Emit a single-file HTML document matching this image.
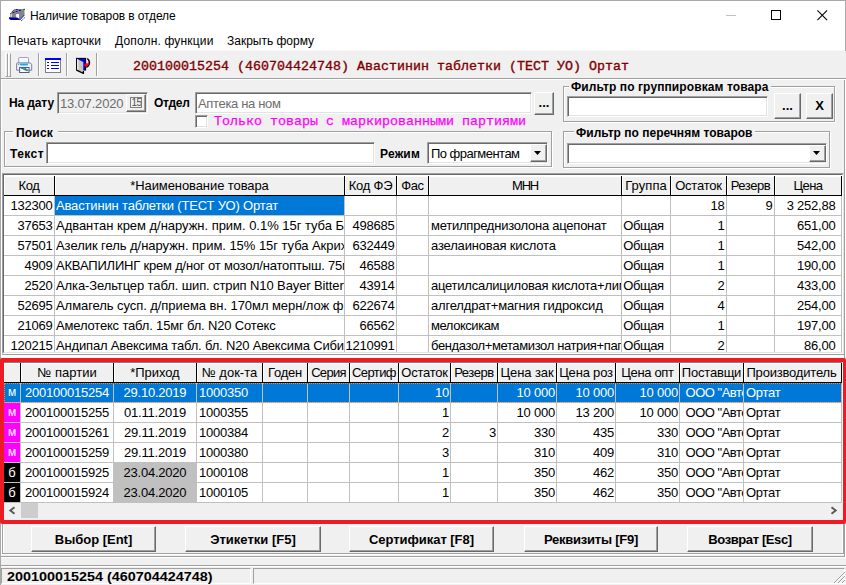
<!DOCTYPE html>
<html><head><meta charset="utf-8"><title>w</title>
<style>
*{box-sizing:border-box;margin:0;padding:0}
html,body{width:846px;height:585px;overflow:hidden;background:#f0f0f0}
body{position:relative;font-family:"Liberation Sans",sans-serif;font-size:13px;color:#000}
.abs,.t,.b,.hc,.c,.ln{position:absolute}
.t{white-space:nowrap;line-height:1}
.b{font-weight:bold}
.sunk{position:absolute;background:#fff;border:1px solid;border-color:#a0a0a0 #fff #fff #a0a0a0;box-shadow:inset 1px 1px 0 #696969,inset -1px -1px 0 #e3e3e3}
.btn{position:absolute;background:#f0f0f0;border:1px solid;border-color:#fff #696969 #696969 #fff;box-shadow:inset -1px -1px 0 #a0a0a0,inset 1px 1px 0 #f0f0f0;text-align:center;font-weight:bold;white-space:nowrap}
.gb{position:absolute;border:1px solid #a0a0a0;box-shadow:1px 1px 0 #fff, inset 1px 1px 0 #fff}
.gbl{position:absolute;background:#f0f0f0;font-weight:bold;white-space:nowrap;line-height:1;padding:0 2px}
.grid{position:absolute;background:#fff;overflow:hidden}
.hc{background:#f0f0f0;border-right:1px solid #000;border-bottom:1px solid #000;box-shadow:inset 1px 1px 0 #fff;height:20px;text-align:center;white-space:nowrap;overflow:hidden;line-height:19px;font-size:13px}
.c{height:19px;line-height:19px;white-space:nowrap;overflow:hidden;font-size:13px}
.r{text-align:right}
.ln{background:#c0c0c0}
</style></head><body>

<div class="abs" style="left:0;top:0;width:846px;height:585px;border:1px solid #a8a8a8;border-bottom:none;border-right:none"></div>
<div class="abs" style="left:1px;top:1px;width:845px;height:49px;background:#fff"></div>
<div class="abs" style="left:1px;top:50px;width:845px;height:1px;background:#f8f8f8"></div>
<svg class="abs" style="left:8px;top:8px" width="18" height="14" viewBox="8 8 18 14">
<path d="M10.300 13.600L14.500 9h10v6.600L20 20.200l-9.700-2.400z" fill="#868686"/>
<path d="M10.500 13.500L14.600 9.200" stroke="#202020" stroke-width="1" stroke-dasharray="1 1"/>
<rect x="23.600" y="8.800" width="1.200" height="1.200" fill="#303030"/>
<g fill="#0000f0"><ellipse cx="13.600" cy="12.500" rx="1.100" ry=".55"/><ellipse cx="16.600" cy="11.500" rx="1.100" ry=".55"/><ellipse cx="17" cy="9.400" rx="1.100" ry=".5"/><ellipse cx="19.800" cy="10.400" rx="1.100" ry=".55"/></g>
<rect x="11" y="14" width=".8" height="3.300" fill="#e8e8e8"/>
<path d="M16.200 14h2.800v4l-2.800-.5v-1.500l-.8-.2.800-.5z" fill="#fff"/>
<path d="M9 17.300l8.500.5 2.700 2.100-9.500.2-1.700-1.300z" fill="#00009a"/>
<path d="M20 19.800l4.200-4.800" stroke="#3030d0" stroke-width="1"/>
<path d="M21.200 20.900l4-3.700" stroke="#101010" stroke-width="1" stroke-dasharray="1 .8"/>
</svg>
<div class="t" style="left:30px;top:10px;font-size:12px;letter-spacing:-0.112px">Наличие товаров в отделе</div>
<div class="abs" style="left:726px;top:15px;width:10px;height:1px;background:#c0c0c0"></div>
<div class="abs" style="left:845px;top:0;width:1px;height:51px;background:#a8a8a8"></div>
<div class="abs" style="left:771px;top:10px;width:10px;height:10px;border:1px solid #000"></div>
<svg class="abs" style="left:817px;top:10px" width="10.500" height="10.500" viewBox="0 0 11 11"><path d="M0.400 0.400L10.600 10.600M10.600 0.400L0.400 10.600" stroke="#000" stroke-width="1.100" fill="none"/></svg>
<div class="t" style="left:8px;top:35px;font-size:12px;letter-spacing:0.119px">Печать карточки</div>
<div class="t" style="left:115px;top:35px;font-size:12px;letter-spacing:0.164px">Дополн. функции</div>
<div class="t" style="left:227px;top:35px;font-size:12px;letter-spacing:-0.013px">Закрыть форму</div>
<div class="abs" style="left:1px;top:51px;width:845px;height:27px;background:#f0f0f0"></div>
<div class="abs" style="left:1px;top:78px;width:845px;height:1px;background:#a0a0a0"></div>
<div class="abs" style="left:1px;top:79px;width:845px;height:1px;background:#fff"></div>
<div class="abs" style="left:5px;top:53px;width:3px;height:24px;border:1px solid;border-color:#fff #a0a0a0 #a0a0a0 #fff"></div>
<div class="abs" style="left:8px;top:53px;width:3px;height:24px;border:1px solid;border-color:#fff #a0a0a0 #a0a0a0 #fff"></div>
<div class="abs" style="left:38px;top:53px;width:1px;height:23px;background:#a0a0a0"></div>
<div class="abs" style="left:39px;top:53px;width:1px;height:23px;background:#fff"></div>
<div class="abs" style="left:66px;top:53px;width:1px;height:23px;background:#a0a0a0"></div>
<div class="abs" style="left:67px;top:53px;width:1px;height:23px;background:#fff"></div>
<div class="abs" style="left:96px;top:53px;width:1px;height:23px;background:#a0a0a0"></div>
<div class="abs" style="left:97px;top:53px;width:1px;height:23px;background:#fff"></div>
<svg class="abs" style="left:16px;top:57px" width="17" height="16" viewBox="0 0 17 16">
<path d="M2.700 6v-4.800q0-.7.700-.7h8.400q.7 0 .7.700v4.800" fill="#f6f9ff" stroke="#9ca2cc"/>
<path d="M0.600 13.200v-6.500q0-.8.800-.8h12.600l1.700 1.300v6z" fill="#eef2fd" stroke="#7a7ea6" stroke-linejoin="round"/>
<rect x="3.900" y="5.900" width="8" height="2.700" rx=".8" fill="#2e9ef4"/>
<rect x="3.900" y="5.900" width="8" height="1" rx=".5" fill="#6cc0fa"/>
<rect x="2" y="6.900" width="1.100" height="1.100" fill="#58b838"/>
<rect x="3.600" y="10.500" width="9.400" height="5" fill="#fff" stroke="#55597c"/>
<path d="M4.500 11.200h4l4 2.800-1.600.2z" fill="#2a8f58"/>
<path d="M5 11h3.500l3.700 2.300" stroke="#3060d0" stroke-width="1" fill="none"/>
</svg>
<svg class="abs" style="left:45px;top:58px" width="16" height="15" viewBox="0 0 16 15" shape-rendering="crispEdges">
<rect x="0.5" y="0.5" width="15" height="14" fill="#fff" stroke="#808080"/>
<rect x="0" y="0" width="16" height="2" fill="#0000ff"/>
<g fill="#0000ff"><rect x="2" y="4" width="2" height="1"/><rect x="6" y="4" width="8" height="1"/>
<rect x="2" y="7" width="2" height="1"/><rect x="6" y="7" width="8" height="1"/>
<rect x="2" y="10" width="2" height="1"/><rect x="6" y="10" width="8" height="1"/></g>
</svg>
<svg class="abs" style="left:76px;top:57px" width="16" height="17" viewBox="0 0 16 17">
<rect x="0.600" y="1.400" width="9" height="11.600" fill="#0000ff" stroke="#000" stroke-width="1.100"/>
<path d="M1 2L7.300 5v10.800L1 12.800z" fill="#c6c6c6"/>
<path d="M1 2l1.300.6v10.800L1 12.800z" fill="#ececec"/>
<path d="M0.500 13.200L7.400 16.400V14" fill="none" stroke="#000" stroke-width="1.300"/>
<rect x="4.900" y="9.300" width="1.200" height="1.200" fill="#c4bc00"/>
<path d="M11.300 1.500c1.800 1.500 2.600 4 1.800 6.100-.5 1.300-1.500 2.200-2.800 2.600" fill="none" stroke="#000" stroke-width="1.500"/>
<path d="M7.900 7.900l2.700-2.400v1.300c1.300-.1 2-1.100 1.700-3.200 1.600 2.500.700 5.100-1.700 5.600v1.300z" fill="#ff0808"/>
</svg>
<div class="t" style="left:133px;top:60px;font-family:'Liberation Mono',monospace;font-size:13.33px;color:#800000;-webkit-text-stroke:0.35px #800000" id="tb">200100015254 (460704424748) Авастинин таблетки (ТЕСТ УО) Ортат</div>
<div class="t b" style="left:9px;top:97px;font-size:12px;letter-spacing:-0.118px" id="l1">На дату</div>
<div class="sunk" style="left:57px;top:92px;width:91px;height:22px;background:#f0f0f0"></div>
<div class="t" style="left:60px;top:96.7px;font-size:13px;color:#6d6d6d;letter-spacing:-0.178px" id="dt">13.07.2020</div>
<div class="btn" style="left:126px;top:94px;width:20px;height:18px;background:#f0f0f0"></div>
<div class="abs" style="left:130px;top:97px;width:12px;height:11px;border:1px solid #808080;font-size:10px;line-height:10.5px;text-align:center;color:#505050;letter-spacing:-0.6px;padding-left:0.5px;overflow:hidden">15</div>
<div class="t b" style="left:154px;top:97px;font-size:12px;letter-spacing:-0.294px" id="l2">Отдел</div>
<div class="sunk" style="left:195px;top:92px;width:337px;height:22px"></div>
<div class="t" style="left:198px;top:96.7px;font-size:13px;color:#6d6d6d;letter-spacing:-0.341px" id="ot">Аптека на ном</div>
<div class="btn" style="left:534px;top:92px;width:20px;height:23px;line-height:19px">...</div>
<div class="sunk" style="left:195px;top:115px;width:13px;height:13px"></div>
<div class="t" style="left:214px;top:115px;font-family:'Liberation Mono',monospace;font-size:13.33px;color:#ff00ff;-webkit-text-stroke:0.25px #ff00ff" id="cb">Только товары с маркированными партиями</div>
<div class="gb" style="left:4px;top:131px;width:548px;height:36px"></div>
<div class="gbl" style="left:13px;top:127px;font-size:12px;padding:0 5px 0 3px;letter-spacing:0.197px" id="g1">Поиск</div>
<div class="t b" style="left:10px;top:148px;font-size:12px;letter-spacing:0.438px" id="l3">Текст</div>
<div class="sunk" style="left:46px;top:142px;width:329px;height:22px"></div>
<div class="t b" style="left:380px;top:148px;font-size:12px;letter-spacing:0.203px" id="l4">Режим</div>
<div class="sunk" style="left:427px;top:142px;width:121px;height:22px"></div>
<div class="t" style="left:431px;top:147px;font-size:13px;letter-spacing:-0.531px" id="cm">По фрагментам</div>
<div class="btn" style="left:530px;top:144px;width:17px;height:18px;background:#f0f0f0"></div>
<svg class="abs" style="left:534px;top:151px" width="7" height="4" viewBox="0 0 7 4"><path d="M0 0h7l-3.5 4z" fill="#000"/></svg>
<div class="gb" style="left:563px;top:86px;width:272px;height:36px"></div>
<div class="gbl" style="left:569px;top:81px;font-size:12px;letter-spacing:0.1px" id="g2">Фильтр по группировкам товара</div>
<div class="sunk" style="left:567px;top:96px;width:201px;height:21px"></div>
<div class="btn" style="left:774px;top:93px;width:27px;height:26px;line-height:23px">...</div>
<div class="btn" style="left:806px;top:93px;width:27px;height:26px;line-height:23px;font-size:13px">X</div>
<div class="gb" style="left:563px;top:131px;width:267px;height:37px"></div>
<div class="gbl" style="left:574px;top:127px;font-size:12px;letter-spacing:0.017px" id="g3">Фильтр по перечням товаров</div>
<div class="sunk" style="left:567px;top:143px;width:260px;height:21px"></div>
<div class="btn" style="left:809px;top:145px;width:17px;height:17px;background:#f0f0f0"></div>
<svg class="abs" style="left:813px;top:151px" width="7" height="4" viewBox="0 0 7 4"><path d="M0 0h7l-3.5 4z" fill="#000"/></svg>
<div class="abs" style="left:2px;top:173px;width:842px;height:181px;border:1px solid;border-color:#a0a0a0 #e3e3e3 #fff #a0a0a0"></div>
<div class="abs" style="left:3px;top:174px;width:840px;height:179px;border:1px solid;border-color:#696969 #fff #e3e3e3 #696969;background:#fff"></div>
<div class="grid" style="left:4px;top:175px;width:838px;height:177px">
<div class="hc" style="left:0px;top:1px;width:51px;letter-spacing:-0.37px">Код</div>
<div class="hc" style="left:51px;top:1px;width:290px;letter-spacing:-0.089px">*Наименование товара</div>
<div class="hc" style="left:341px;top:1px;width:52px;letter-spacing:-0.242px">Код ФЭ</div>
<div class="hc" style="left:393px;top:1px;width:32px;letter-spacing:-0.375px">Фас</div>
<div class="hc" style="left:425px;top:1px;width:193px;letter-spacing:-1.203px">МНН</div>
<div class="hc" style="left:618px;top:1px;width:49px;letter-spacing:0.049px">Группа</div>
<div class="hc" style="left:667px;top:1px;width:56px;letter-spacing:-0.213px">Остаток</div>
<div class="hc" style="left:723px;top:1px;width:48px;letter-spacing:-0.439px">Резерв</div>
<div class="hc" style="left:771px;top:1px;width:67px;letter-spacing:-0.516px">Цена</div>
<div class="c r" style="left:0px;top:21px;width:50px;letter-spacing:-0.23px;padding-right:1.5px;">132300</div>
<div class="c" style="left:51px;top:21px;width:289px;background:#0078d7;color:#fff;letter-spacing:-0.162px;padding-left:1px;">Авастинин таблетки (ТЕСТ УО) Ортат</div>
<div class="c r" style="left:341px;top:21px;width:51px;letter-spacing:-0.23px;padding-right:1.5px;"></div>
<div class="c" style="left:393px;top:21px;width:31px;padding-left:2px;"></div>
<div class="c" style="left:425px;top:21px;width:192px;padding-left:2px;"></div>
<div class="c" style="left:618px;top:21px;width:48px;padding-left:2px;"></div>
<div class="c r" style="left:667px;top:21px;width:55px;letter-spacing:-0.23px;padding-right:1.5px;">18</div>
<div class="c r" style="left:723px;top:21px;width:47px;letter-spacing:-0.23px;padding-right:1.5px;">9</div>
<div class="c r" style="left:771px;top:21px;width:66px;letter-spacing:-0.23px;padding-right:5.5px;">3 252,88</div>
<div class="ln" style="left:0;top:40px;width:838px;height:1px"></div>
<div class="c r" style="left:0px;top:41px;width:50px;letter-spacing:-0.23px;padding-right:1.5px;">37653</div>
<div class="c" style="left:51px;top:41px;width:289px;letter-spacing:-0.031px;padding-left:1px;">Адвантан крем д/наружн. прим. 0.1% 15г туба Байер</div>
<div class="c r" style="left:341px;top:41px;width:51px;letter-spacing:-0.23px;padding-right:1.5px;">498685</div>
<div class="c" style="left:393px;top:41px;width:31px;padding-left:2px;"></div>
<div class="c" style="left:425px;top:41px;width:192px;letter-spacing:-0.236px;padding-left:2px;">метилпреднизолона ацепонат</div>
<div class="c" style="left:618px;top:41px;width:48px;letter-spacing:-0.406px;margin-left:-0.800px;padding-left:2px;">Общая</div>
<div class="c r" style="left:667px;top:41px;width:55px;letter-spacing:-0.23px;padding-right:1.5px;">1</div>
<div class="c r" style="left:723px;top:41px;width:47px;letter-spacing:-0.23px;padding-right:1.5px;"></div>
<div class="c r" style="left:771px;top:41px;width:66px;letter-spacing:-0.23px;padding-right:5.5px;">651,00</div>
<div class="ln" style="left:0;top:60px;width:838px;height:1px"></div>
<div class="c r" style="left:0px;top:61px;width:50px;letter-spacing:-0.23px;padding-right:1.5px;">57501</div>
<div class="c" style="left:51px;top:61px;width:289px;letter-spacing:-0.048px;padding-left:1px;">Азелик гель д/наружн. прим. 15% 15г туба Акрихин</div>
<div class="c r" style="left:341px;top:61px;width:51px;letter-spacing:-0.23px;padding-right:1.5px;">632449</div>
<div class="c" style="left:393px;top:61px;width:31px;padding-left:2px;"></div>
<div class="c" style="left:425px;top:61px;width:192px;letter-spacing:-0.168px;padding-left:2px;">азелаиновая кислота</div>
<div class="c" style="left:618px;top:61px;width:48px;letter-spacing:-0.406px;margin-left:-0.800px;padding-left:2px;">Общая</div>
<div class="c r" style="left:667px;top:61px;width:55px;letter-spacing:-0.23px;padding-right:1.5px;">1</div>
<div class="c r" style="left:723px;top:61px;width:47px;letter-spacing:-0.23px;padding-right:1.5px;"></div>
<div class="c r" style="left:771px;top:61px;width:66px;letter-spacing:-0.23px;padding-right:5.5px;">542,00</div>
<div class="ln" style="left:0;top:80px;width:838px;height:1px"></div>
<div class="c r" style="left:0px;top:81px;width:50px;letter-spacing:-0.23px;padding-right:1.5px;">4909</div>
<div class="c" style="left:51px;top:81px;width:289px;letter-spacing:-0.193px;padding-left:1px;">АКВАПИЛИНГ крем д/ног от мозол/натоптыш. 75мл</div>
<div class="c r" style="left:341px;top:81px;width:51px;letter-spacing:-0.23px;padding-right:1.5px;">46588</div>
<div class="c" style="left:393px;top:81px;width:31px;padding-left:2px;"></div>
<div class="c" style="left:425px;top:81px;width:192px;padding-left:2px;"></div>
<div class="c" style="left:618px;top:81px;width:48px;letter-spacing:-0.406px;margin-left:-0.800px;padding-left:2px;">Общая</div>
<div class="c r" style="left:667px;top:81px;width:55px;letter-spacing:-0.23px;padding-right:1.5px;">1</div>
<div class="c r" style="left:723px;top:81px;width:47px;letter-spacing:-0.23px;padding-right:1.5px;"></div>
<div class="c r" style="left:771px;top:81px;width:66px;letter-spacing:-0.23px;padding-right:5.5px;">190,00</div>
<div class="ln" style="left:0;top:100px;width:838px;height:1px"></div>
<div class="c r" style="left:0px;top:101px;width:50px;letter-spacing:-0.23px;padding-right:1.5px;">2520</div>
<div class="c" style="left:51px;top:101px;width:289px;letter-spacing:-0.107px;padding-left:1px;">Алка-Зельтцер табл. шип. стрип N10 Bayer Bitterfeld</div>
<div class="c r" style="left:341px;top:101px;width:51px;letter-spacing:-0.23px;padding-right:1.5px;">43914</div>
<div class="c" style="left:393px;top:101px;width:31px;padding-left:2px;"></div>
<div class="c" style="left:425px;top:101px;width:192px;letter-spacing:-0.247px;padding-left:2px;">ацетилсалициловая кислота+лимонная</div>
<div class="c" style="left:618px;top:101px;width:48px;letter-spacing:-0.406px;margin-left:-0.800px;padding-left:2px;">Общая</div>
<div class="c r" style="left:667px;top:101px;width:55px;letter-spacing:-0.23px;padding-right:1.5px;">2</div>
<div class="c r" style="left:723px;top:101px;width:47px;letter-spacing:-0.23px;padding-right:1.5px;"></div>
<div class="c r" style="left:771px;top:101px;width:66px;letter-spacing:-0.23px;padding-right:5.5px;">433,00</div>
<div class="ln" style="left:0;top:120px;width:838px;height:1px"></div>
<div class="c r" style="left:0px;top:121px;width:50px;letter-spacing:-0.23px;padding-right:1.5px;">52695</div>
<div class="c" style="left:51px;top:121px;width:289px;letter-spacing:-0.064px;padding-left:1px;">Алмагель сусп. д/приема вн. 170мл мерн/лож ф.</div>
<div class="c r" style="left:341px;top:121px;width:51px;letter-spacing:-0.23px;padding-right:1.5px;">622674</div>
<div class="c" style="left:393px;top:121px;width:31px;padding-left:2px;"></div>
<div class="c" style="left:425px;top:121px;width:192px;letter-spacing:-0.177px;padding-left:2px;">алгелдрат+магния гидроксид</div>
<div class="c" style="left:618px;top:121px;width:48px;letter-spacing:-0.406px;margin-left:-0.800px;padding-left:2px;">Общая</div>
<div class="c r" style="left:667px;top:121px;width:55px;letter-spacing:-0.23px;padding-right:1.5px;">4</div>
<div class="c r" style="left:723px;top:121px;width:47px;letter-spacing:-0.23px;padding-right:1.5px;"></div>
<div class="c r" style="left:771px;top:121px;width:66px;letter-spacing:-0.23px;padding-right:5.5px;">254,00</div>
<div class="ln" style="left:0;top:140px;width:838px;height:1px"></div>
<div class="c r" style="left:0px;top:141px;width:50px;letter-spacing:-0.23px;padding-right:1.5px;">21069</div>
<div class="c" style="left:51px;top:141px;width:289px;letter-spacing:-0.168px;padding-left:1px;">Амелотекс табл. 15мг бл. N20 Сотекс</div>
<div class="c r" style="left:341px;top:141px;width:51px;letter-spacing:-0.23px;padding-right:1.5px;">66562</div>
<div class="c" style="left:393px;top:141px;width:31px;padding-left:2px;"></div>
<div class="c" style="left:425px;top:141px;width:192px;letter-spacing:-0.444px;padding-left:2px;">мелоксикам</div>
<div class="c" style="left:618px;top:141px;width:48px;letter-spacing:-0.406px;margin-left:-0.800px;padding-left:2px;">Общая</div>
<div class="c r" style="left:667px;top:141px;width:55px;letter-spacing:-0.23px;padding-right:1.5px;">1</div>
<div class="c r" style="left:723px;top:141px;width:47px;letter-spacing:-0.23px;padding-right:1.5px;"></div>
<div class="c r" style="left:771px;top:141px;width:66px;letter-spacing:-0.23px;padding-right:5.5px;">197,00</div>
<div class="ln" style="left:0;top:160px;width:838px;height:1px"></div>
<div class="c r" style="left:0px;top:161px;width:50px;letter-spacing:-0.23px;padding-right:1.5px;">120215</div>
<div class="c" style="left:51px;top:161px;width:289px;letter-spacing:-0.172px;padding-left:1px;">Андипал Авексима табл. бл. N20 Авексима Сибирь</div>
<div class="c r" style="left:341px;top:161px;width:51px;letter-spacing:-0.23px;padding-right:1.5px;">1210991</div>
<div class="c" style="left:393px;top:161px;width:31px;padding-left:2px;"></div>
<div class="c" style="left:425px;top:161px;width:192px;letter-spacing:-0.374px;padding-left:2px;">бендазол+метамизол натрия+папаверин</div>
<div class="c" style="left:618px;top:161px;width:48px;letter-spacing:-0.406px;margin-left:-0.800px;padding-left:2px;">Общая</div>
<div class="c r" style="left:667px;top:161px;width:55px;letter-spacing:-0.23px;padding-right:1.5px;">2</div>
<div class="c r" style="left:723px;top:161px;width:47px;letter-spacing:-0.23px;padding-right:1.5px;"></div>
<div class="c r" style="left:771px;top:161px;width:66px;letter-spacing:-0.23px;padding-right:5.5px;">86,00</div>
<div class="ln" style="left:0;top:180px;width:838px;height:1px"></div>
<div class="ln" style="left:50px;top:21px;width:1px;height:160px"></div>
<div class="ln" style="left:340px;top:21px;width:1px;height:160px"></div>
<div class="ln" style="left:392px;top:21px;width:1px;height:160px"></div>
<div class="ln" style="left:424px;top:21px;width:1px;height:160px"></div>
<div class="ln" style="left:617px;top:21px;width:1px;height:160px"></div>
<div class="ln" style="left:666px;top:21px;width:1px;height:160px"></div>
<div class="ln" style="left:722px;top:21px;width:1px;height:160px"></div>
<div class="ln" style="left:770px;top:21px;width:1px;height:160px"></div>
<div class="ln" style="left:837px;top:21px;width:1px;height:160px"></div>
</div>
<div class="abs" style="left:1px;top:354px;width:843px;height:1px;background:#a0a0a0"></div>
<div class="abs" style="left:1px;top:355px;width:844px;height:3px;background:#fff"></div>
<div class="abs" style="left:0;top:358px;width:846px;height:166px;border:4px solid #ed1c24;border-right-width:3px;border-radius:2px"></div>
<div class="abs" style="left:4px;top:362px;width:838px;height:1px;background:#808080;z-index:2"></div>
<div class="grid" style="left:4px;top:362px;width:839px;height:158px;background:#fff">
<div class="hc" style="left:0px;top:1px;width:17px"></div>
<div class="hc" style="left:17px;top:1px;width:93px;letter-spacing:0.019px">№ партии</div>
<div class="hc" style="left:110px;top:1px;width:83px;letter-spacing:-0.069px">*Приход</div>
<div class="hc" style="left:193px;top:1px;width:66px;letter-spacing:0.02px">№ док-та</div>
<div class="hc" style="left:259px;top:1px;width:45px;letter-spacing:-0.202px">Годен</div>
<div class="hc" style="left:304px;top:1px;width:42px;letter-spacing:-0.691px">Серия</div>
<div class="hc" style="left:346px;top:1px;width:49px;letter-spacing:-0.581px">Сертиф</div>
<div class="hc" style="left:395px;top:1px;width:52px;letter-spacing:-0.242px">Остаток</div>
<div class="hc" style="left:447px;top:1px;width:47px;letter-spacing:-0.422px">Резерв</div>
<div class="hc" style="left:494px;top:1px;width:59px;letter-spacing:-0.094px">Цена зак</div>
<div class="hc" style="left:553px;top:1px;width:59px;letter-spacing:-0.195px">Цена роз</div>
<div class="hc" style="left:612px;top:1px;width:64px;letter-spacing:-0.337px">Цена опт</div>
<div class="hc" style="left:676px;top:1px;width:64px;letter-spacing:-0.198px">Поставщи</div>
<div class="hc" style="left:740px;top:1px;width:98px;letter-spacing:-0.188px;padding-right:2px">Производитель</div>
<div class="abs" style="left:0;top:21px;width:837px;height:19px;background:#0078d7"></div>
<div class="c" style="left:0px;top:21px;width:16px;text-align:center;color:#fff;font-size:12px;">м</div>
<div class="c" style="left:17px;top:21px;width:92px;text-align:center;color:#fff;letter-spacing:-0.23px;">200100015254</div>
<div class="c" style="left:110px;top:21px;width:82px;text-align:center;color:#fff;letter-spacing:-0.23px;">29.10.2019</div>
<div class="c" style="left:193px;top:21px;width:65px;color:#fff;padding-left:2px;letter-spacing:-0.23px;">1000350</div>
<div class="c" style="left:259px;top:21px;width:44px;color:#fff;"></div>
<div class="c" style="left:304px;top:21px;width:41px;color:#fff;"></div>
<div class="c" style="left:346px;top:21px;width:48px;color:#fff;"></div>
<div class="c r" style="left:395px;top:21px;width:51px;color:#fff;padding-right:1px;letter-spacing:-0.23px;">10</div>
<div class="c r" style="left:447px;top:21px;width:46px;color:#fff;padding-right:1px;letter-spacing:-0.23px;"></div>
<div class="c r" style="left:494px;top:21px;width:58px;color:#fff;padding-right:1px;letter-spacing:-0.23px;">10 000</div>
<div class="c r" style="left:553px;top:21px;width:58px;color:#fff;padding-right:1px;letter-spacing:-0.23px;">10 000</div>
<div class="c r" style="left:612px;top:21px;width:63px;color:#fff;padding-right:1px;letter-spacing:-0.23px;">10 000</div>
<div class="c" style="left:676px;top:21px;width:63px;color:#fff;padding-left:5.5px;letter-spacing:-0.477px;">ООО "Авто</div>
<div class="c" style="left:740px;top:21px;width:97px;color:#fff;padding-left:2px;letter-spacing:-0.253px;">Ортат</div>
<div class="ln" style="left:0;top:40px;width:838px;height:1px"></div>
<div class="c" style="left:0px;top:41px;width:16px;text-align:center;color:#fff;background:#ff00ff;font-size:12px;">м</div>
<div class="c" style="left:17px;top:41px;width:92px;text-align:center;letter-spacing:-0.23px;">200100015255</div>
<div class="c" style="left:110px;top:41px;width:82px;text-align:center;letter-spacing:-0.23px;">01.11.2019</div>
<div class="c" style="left:193px;top:41px;width:65px;padding-left:2px;letter-spacing:-0.23px;">1000355</div>
<div class="c" style="left:259px;top:41px;width:44px;"></div>
<div class="c" style="left:304px;top:41px;width:41px;"></div>
<div class="c" style="left:346px;top:41px;width:48px;"></div>
<div class="c r" style="left:395px;top:41px;width:51px;padding-right:1px;letter-spacing:-0.23px;">1</div>
<div class="c r" style="left:447px;top:41px;width:46px;padding-right:1px;letter-spacing:-0.23px;"></div>
<div class="c r" style="left:494px;top:41px;width:58px;padding-right:1px;letter-spacing:-0.23px;">10 000</div>
<div class="c r" style="left:553px;top:41px;width:58px;padding-right:1px;letter-spacing:-0.23px;">13 200</div>
<div class="c r" style="left:612px;top:41px;width:63px;padding-right:1px;letter-spacing:-0.23px;">10 000</div>
<div class="c" style="left:676px;top:41px;width:63px;padding-left:5.5px;letter-spacing:-0.477px;">ООО "Авто</div>
<div class="c" style="left:740px;top:41px;width:97px;padding-left:2px;letter-spacing:-0.253px;">Ортат</div>
<div class="ln" style="left:0;top:60px;width:838px;height:1px"></div>
<div class="c" style="left:0px;top:61px;width:16px;text-align:center;color:#fff;background:#ff00ff;font-size:12px;">м</div>
<div class="c" style="left:17px;top:61px;width:92px;text-align:center;letter-spacing:-0.23px;">200100015261</div>
<div class="c" style="left:110px;top:61px;width:82px;text-align:center;letter-spacing:-0.23px;">29.11.2019</div>
<div class="c" style="left:193px;top:61px;width:65px;padding-left:2px;letter-spacing:-0.23px;">1000384</div>
<div class="c" style="left:259px;top:61px;width:44px;"></div>
<div class="c" style="left:304px;top:61px;width:41px;"></div>
<div class="c" style="left:346px;top:61px;width:48px;"></div>
<div class="c r" style="left:395px;top:61px;width:51px;padding-right:1px;letter-spacing:-0.23px;">2</div>
<div class="c r" style="left:447px;top:61px;width:46px;padding-right:1px;letter-spacing:-0.23px;">3</div>
<div class="c r" style="left:494px;top:61px;width:58px;padding-right:1px;letter-spacing:-0.23px;">330</div>
<div class="c r" style="left:553px;top:61px;width:58px;padding-right:1px;letter-spacing:-0.23px;">435</div>
<div class="c r" style="left:612px;top:61px;width:63px;padding-right:1px;letter-spacing:-0.23px;">330</div>
<div class="c" style="left:676px;top:61px;width:63px;padding-left:5.5px;letter-spacing:-0.477px;">ООО "Авто</div>
<div class="c" style="left:740px;top:61px;width:97px;padding-left:2px;letter-spacing:-0.253px;">Ортат</div>
<div class="ln" style="left:0;top:80px;width:838px;height:1px"></div>
<div class="c" style="left:0px;top:81px;width:16px;text-align:center;color:#fff;background:#ff00ff;font-size:12px;">м</div>
<div class="c" style="left:17px;top:81px;width:92px;text-align:center;letter-spacing:-0.23px;">200100015259</div>
<div class="c" style="left:110px;top:81px;width:82px;text-align:center;letter-spacing:-0.23px;">29.11.2019</div>
<div class="c" style="left:193px;top:81px;width:65px;padding-left:2px;letter-spacing:-0.23px;">1000380</div>
<div class="c" style="left:259px;top:81px;width:44px;"></div>
<div class="c" style="left:304px;top:81px;width:41px;"></div>
<div class="c" style="left:346px;top:81px;width:48px;"></div>
<div class="c r" style="left:395px;top:81px;width:51px;padding-right:1px;letter-spacing:-0.23px;">3</div>
<div class="c r" style="left:447px;top:81px;width:46px;padding-right:1px;letter-spacing:-0.23px;"></div>
<div class="c r" style="left:494px;top:81px;width:58px;padding-right:1px;letter-spacing:-0.23px;">310</div>
<div class="c r" style="left:553px;top:81px;width:58px;padding-right:1px;letter-spacing:-0.23px;">409</div>
<div class="c r" style="left:612px;top:81px;width:63px;padding-right:1px;letter-spacing:-0.23px;">310</div>
<div class="c" style="left:676px;top:81px;width:63px;padding-left:5.5px;letter-spacing:-0.477px;">ООО "Авто</div>
<div class="c" style="left:740px;top:81px;width:97px;padding-left:2px;letter-spacing:-0.253px;">Ортат</div>
<div class="ln" style="left:0;top:100px;width:838px;height:1px"></div>
<div class="c" style="left:0px;top:101px;width:16px;text-align:center;color:#fff;background:#000;font-size:13px;">б</div>
<div class="c" style="left:17px;top:101px;width:92px;text-align:center;letter-spacing:-0.23px;">200100015925</div>
<div class="c" style="left:110px;top:101px;width:82px;text-align:center;background:#c0c0c0;letter-spacing:-0.23px;">23.04.2020</div>
<div class="c" style="left:193px;top:101px;width:65px;padding-left:2px;letter-spacing:-0.23px;">1000108</div>
<div class="c" style="left:259px;top:101px;width:44px;"></div>
<div class="c" style="left:304px;top:101px;width:41px;"></div>
<div class="c" style="left:346px;top:101px;width:48px;"></div>
<div class="c r" style="left:395px;top:101px;width:51px;padding-right:1px;letter-spacing:-0.23px;">1</div>
<div class="c r" style="left:447px;top:101px;width:46px;padding-right:1px;letter-spacing:-0.23px;"></div>
<div class="c r" style="left:494px;top:101px;width:58px;padding-right:1px;letter-spacing:-0.23px;">350</div>
<div class="c r" style="left:553px;top:101px;width:58px;padding-right:1px;letter-spacing:-0.23px;">462</div>
<div class="c r" style="left:612px;top:101px;width:63px;padding-right:1px;letter-spacing:-0.23px;">350</div>
<div class="c" style="left:676px;top:101px;width:63px;padding-left:5.5px;letter-spacing:-0.477px;">ООО "Авто</div>
<div class="c" style="left:740px;top:101px;width:97px;padding-left:2px;letter-spacing:-0.253px;">Ортат</div>
<div class="ln" style="left:0;top:120px;width:838px;height:1px"></div>
<div class="c" style="left:0px;top:121px;width:16px;text-align:center;color:#fff;background:#000;font-size:13px;">б</div>
<div class="c" style="left:17px;top:121px;width:92px;text-align:center;letter-spacing:-0.23px;">200100015924</div>
<div class="c" style="left:110px;top:121px;width:82px;text-align:center;background:#c0c0c0;letter-spacing:-0.23px;">23.04.2020</div>
<div class="c" style="left:193px;top:121px;width:65px;padding-left:2px;letter-spacing:-0.23px;">1000105</div>
<div class="c" style="left:259px;top:121px;width:44px;"></div>
<div class="c" style="left:304px;top:121px;width:41px;"></div>
<div class="c" style="left:346px;top:121px;width:48px;"></div>
<div class="c r" style="left:395px;top:121px;width:51px;padding-right:1px;letter-spacing:-0.23px;">1</div>
<div class="c r" style="left:447px;top:121px;width:46px;padding-right:1px;letter-spacing:-0.23px;"></div>
<div class="c r" style="left:494px;top:121px;width:58px;padding-right:1px;letter-spacing:-0.23px;">350</div>
<div class="c r" style="left:553px;top:121px;width:58px;padding-right:1px;letter-spacing:-0.23px;">462</div>
<div class="c r" style="left:612px;top:121px;width:63px;padding-right:1px;letter-spacing:-0.23px;">350</div>
<div class="c" style="left:676px;top:121px;width:63px;padding-left:5.5px;letter-spacing:-0.477px;">ООО "Авто</div>
<div class="c" style="left:740px;top:121px;width:97px;padding-left:2px;letter-spacing:-0.253px;">Ортат</div>
<div class="ln" style="left:0;top:140px;width:838px;height:1px"></div>
<div class="ln" style="left:16px;top:21px;width:1px;height:120px"></div>
<div class="ln" style="left:109px;top:21px;width:1px;height:120px"></div>
<div class="ln" style="left:192px;top:21px;width:1px;height:120px"></div>
<div class="ln" style="left:258px;top:21px;width:1px;height:120px"></div>
<div class="ln" style="left:303px;top:21px;width:1px;height:120px"></div>
<div class="ln" style="left:345px;top:21px;width:1px;height:120px"></div>
<div class="ln" style="left:394px;top:21px;width:1px;height:120px"></div>
<div class="ln" style="left:446px;top:21px;width:1px;height:120px"></div>
<div class="ln" style="left:493px;top:21px;width:1px;height:120px"></div>
<div class="ln" style="left:552px;top:21px;width:1px;height:120px"></div>
<div class="ln" style="left:611px;top:21px;width:1px;height:120px"></div>
<div class="ln" style="left:675px;top:21px;width:1px;height:120px"></div>
<div class="ln" style="left:739px;top:21px;width:1px;height:120px"></div>
<div class="ln" style="left:837px;top:21px;width:1px;height:120px"></div>
<div class="abs" style="left:0;top:21px;width:838px;height:20px;border:1px dotted #f0903c"></div>
<div class="abs" style="left:0;top:141px;width:839px;height:17px;background:#f0f0f0"></div>
<div class="abs" style="left:17px;top:141px;width:17px;height:15px;background:#cdcdcd"></div>
<svg class="abs" style="left:4px;top:144px" width="8" height="9" viewBox="0 0 8 9"><path d="M6.500 1.200L2.300 4.500L6.500 7.800" stroke="#585858" stroke-width="1.900" fill="none"/></svg>
<svg class="abs" style="left:826px;top:144px" width="8" height="9" viewBox="0 0 8 9"><path d="M1.500 1.200L5.700 4.500L1.500 7.800" stroke="#585858" stroke-width="1.900" fill="none"/></svg>
</div>
<div class="abs" style="left:844px;top:80px;width:1px;height:278px;background:#a0a0a0"></div>
<div class="abs" style="left:845px;top:80px;width:1px;height:278px;background:#fff"></div>
<div class="abs" style="left:844px;top:524px;width:1px;height:33px;background:#a0a0a0"></div>
<div class="abs" style="left:845px;top:524px;width:1px;height:33px;background:#fff"></div>
<div class="abs" style="left:1px;top:80px;width:1px;height:278px;background:#fff"></div>
<div class="abs" style="left:1px;top:524px;width:1px;height:33px;background:#fff"></div>
<div class="abs" style="left:2px;top:524px;width:1px;height:30px;background:#a0a0a0"></div>
<div class="abs" style="left:3px;top:524px;width:1px;height:30px;background:#fff"></div>
<div class="abs" style="left:842px;top:524px;width:1px;height:30px;background:#fff"></div>
<div class="abs" style="left:843px;top:524px;width:1px;height:30px;background:#a0a0a0"></div>
<div class="abs" style="left:2px;top:553px;width:842px;height:1px;background:#a0a0a0"></div>
<div class="abs" style="left:2px;top:554px;width:842px;height:1px;background:#fff"></div>
<div class="abs" style="left:1px;top:556px;width:844px;height:1px;background:#a0a0a0"></div>
<div class="abs" style="left:1px;top:557px;width:845px;height:1px;background:#fff"></div>
<div class="abs" style="left:1px;top:565px;width:845px;height:1px;background:#a0a0a0"></div>
<div class="abs" style="left:1px;top:566px;width:845px;height:1px;background:#fff"></div>
<div class="btn" style="left:31px;top:526px;width:125px;height:26px;line-height:25px;font-size:13px;letter-spacing:-0.011px">Выбор [Ent]</div>
<div class="btn" style="left:185px;top:526px;width:136px;height:26px;line-height:25px;font-size:13px;letter-spacing:0.001px">Этикетки [F5]</div>
<div class="btn" style="left:349px;top:526px;width:145px;height:26px;line-height:25px;font-size:13px;letter-spacing:-0.045px">Сертификат [F8]</div>
<div class="btn" style="left:524px;top:526px;width:134px;height:26px;line-height:25px;font-size:13px;letter-spacing:-0.246px">Реквизиты [F9]</div>
<div class="btn" style="left:687px;top:526px;width:126px;height:26px;line-height:25px;font-size:13px;letter-spacing:-0.389px">Возврат [Esc]</div>
<div class="abs" style="left:1px;top:568px;width:250px;height:16px;border:1px solid;border-color:#a0a0a0 #fff #fff #a0a0a0"></div>
<div class="abs" style="left:253px;top:568px;width:592px;height:16px;border:1px solid;border-color:#a0a0a0 #fff #fff #a0a0a0"></div>
<div class="t b" style="left:6.500px;top:570px;font-size:13px;transform-origin:0 0;transform:scaleX(1.1060)" id="sb">200100015254 (460704424748)</div>
<svg class="abs" style="left:833px;top:571px" width="13" height="13" viewBox="0 0 13 13"><path d="M12 1L1 12M12 5L5 12M12 9L9 12" stroke="#a0a0a0" stroke-width="1"/><path d="M12 2L2 12M12 6L6 12M12 10L10 12" stroke="#fff" stroke-width="1"/></svg>
</body></html>
